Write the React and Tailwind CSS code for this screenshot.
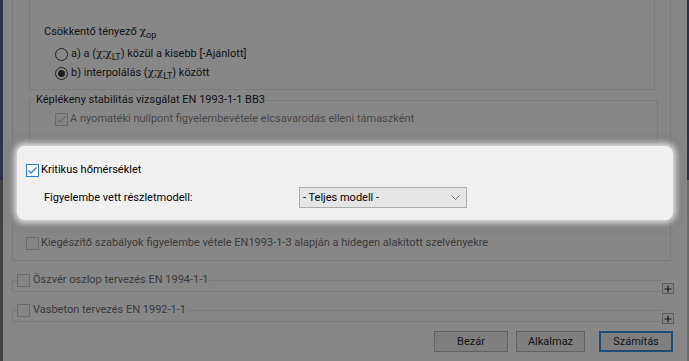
import React from "react";

const LINE = "border-[#7b7b7b]";

function Check({ checked, variant = "disabled" }) {
  const styles = {
    disabled: { box: "border-[#6b6b6b] bg-[#858585]", stroke: "#6b6b6b" },
    blue: { box: "border-[#2a7ccd] bg-white", stroke: "#2a7ccd" },
  }[variant];
  return (
    <span className={`relative inline-block w-[13px] h-[13px] shrink-0 border ${styles.box}`}>
      {checked && (
        <svg className="absolute left-0 top-0" width="11" height="11" viewBox="0 0 11 11">
          <polyline points="1.5,5.5 4,8 9.5,2.5" fill="none" stroke={styles.stroke} strokeWidth="1.3" />
        </svg>
      )}
    </span>
  );
}

function Radio({ checked }) {
  return (
    <span className="relative inline-flex items-center justify-center w-[13px] h-[13px] shrink-0 rounded-full border border-[#1e1e1e] bg-[#878787]">
      {checked && <span className="w-[7px] h-[7px] rounded-full bg-[#1e1e1e]" />}
    </span>
  );
}

function Chi({ sub }) {
  return (
    <span className="whitespace-nowrap">
      <span className="font-['DejaVu_Serif'] text-[11px]">χ</span>
      {sub && <span className="relative top-[3px] text-[9px]">{sub}</span>}
    </span>
  );
}

function Plus() {
  return (
    <span className="flex items-center justify-center w-[12px] h-[11px] border border-[#5c5c5c] bg-[#858585]">
      <svg width="8" height="8" viewBox="0 0 8 8">
        <path d="M4 0.5V7.5M0.5 4H7.5" stroke="#111" strokeWidth="1" />
      </svg>
    </span>
  );
}

function CollapsedGroup({ label, mt }) {
  return (
    <div className={`ml-[9px] flex items-start ${mt}`}>
      <fieldset className={`w-[650px] h-[20px] border-l border-y ${LINE}`}>
        <legend className="ml-[4px] pr-[2px]">
          <span className="flex items-center h-[16px] gap-[3px] text-[#3a3a3a]">
            <Check />
            <span>{label}</span>
          </span>
        </legend>
      </fieldset>
      <span className="mt-[11px]">
        <Plus />
      </span>
    </div>
  );
}

function Button({ children, w, primary }) {
  return (
    <div
      className={`h-[21px] flex items-center justify-center bg-[#7f7f7f] text-[#111] ${w} ${
        primary ? "border-2 border-[#1d4c74]" : "border border-[#616161]"
      }`}
    >
      {children}
    </div>
  );
}

export default function App() {
  return (
    <div className="w-[689px] h-[361px] overflow-hidden bg-[#878787] flex font-['Roboto',sans-serif] text-[11px] leading-[16px] text-[#111]">
      <div className="w-[3px] flex flex-col">
        <div className="h-[180px] bg-[#2d3149]" />
        <div className="flex-1 bg-[#414141]" />
      </div>

      <div className="w-[684px] flex flex-col">
        {/* outer group */}
        <div className={`ml-[9px] w-[659px] h-[261px] border-x border-b ${LINE} flex flex-col`}>
          {/* Csökkentő tényező */}
          <div className={`ml-[16px] w-[626px] h-[90px] border-x border-b ${LINE} pt-[24px] pl-[14px]`}>
            <div className="h-[16px] flex items-center">
              <span>
                Csökkentő tényező <Chi sub="op" />
              </span>
            </div>
            <div className="mt-[6px] ml-[11px] h-[16px] flex items-center gap-[3px]">
              <Radio />
              <span>
                a) a (<Chi />;<Chi sub="LT" />) közül a kisebb [-Ajánlott]
              </span>
            </div>
            <div className="mt-[3px] ml-[11px] h-[16px] flex items-center gap-[3px]">
              <Radio checked />
              <span>
                b) interpolálás (<Chi />;<Chi sub="LT" />) között
              </span>
            </div>
          </div>

          {/* Képlékeny stabilitás */}
          <fieldset className={`mt-[2px] ml-[16px] w-[629px] h-[51px] border ${LINE}`}>
            <legend className="ml-[4px] px-[2px] leading-[16px]">Képlékeny stabilitás vizsgálat EN 1993-1-1 BB3</legend>
            <div className="mt-[3px] ml-[25px] h-[16px] flex items-center gap-[2px] text-[#474747]">
              <Check checked />
              <span>A nyomatéki nullpont figyelembevétele elcsavarodás elleni támaszként</span>
            </div>
          </fieldset>

          {/* highlighted section */}
          <div className="mt-[3px] ml-[4px] -mr-[3px] h-[74px] rounded-[8px] bg-[#f0f0f0] shadow-[0_0_6px_3px_#e4e4e4,0_0_14px_5px_rgba(0,0,0,0.12)] pt-[16px] pl-[9px] text-black">
            <div className="h-[16px] flex items-center gap-[2px]">
              <Check checked variant="blue" />
              <span>Kritikus hőmérséklet</span>
            </div>
            <div className="mt-[9px] h-[21px] flex items-center">
              <span className="ml-[18px] w-[255px]">Figyelembe vett részletmodell:</span>
              <div className="w-[168px] h-[21px] border border-[#acacac] bg-[#e5e5e5] flex items-center pl-[3px] pr-[6px]">
                <span className="flex-1">- Teljes modell -</span>
                <svg width="9" height="6" viewBox="0 0 9 6">
                  <polyline points="0.5,0.5 4.5,4.5 8.5,0.5" fill="none" stroke="#6d6d6d" strokeWidth="1" />
                </svg>
              </div>
            </div>
          </div>

          <div className="mt-[15px] ml-[13px] h-[16px] flex items-center gap-[2px] text-[#3a3a3a]">
            <Check />
            <span>Kiegészítő szabályok figyelembe vétele EN1993-1-3 alapján a hidegen alakított szelvényekre</span>
          </div>
        </div>

        <CollapsedGroup label="Öszvér oszlop tervezés EN 1994-1-1" mt="mt-[11px]" />
        <CollapsedGroup label="Vasbeton tervezés EN 1992-1-1" mt="mt-[8px]" />

        <div className="mt-[7px] ml-[431px] flex">
          <Button w="w-[74px]">Bezár</Button>
          <span className="ml-[8px]">
            <Button w="w-[69px]">Alkalmaz</Button>
          </span>
          <span className="ml-[14px]">
            <Button w="w-[74px]" primary>
              Számítás
            </Button>
          </span>
        </div>
      </div>

      <div className="w-[2px] flex flex-col">
        <div className="h-[180px] bg-[#2d3149]" />
        <div className="flex-1 bg-[#6a6a6a]" />
      </div>
    </div>
  );
}
